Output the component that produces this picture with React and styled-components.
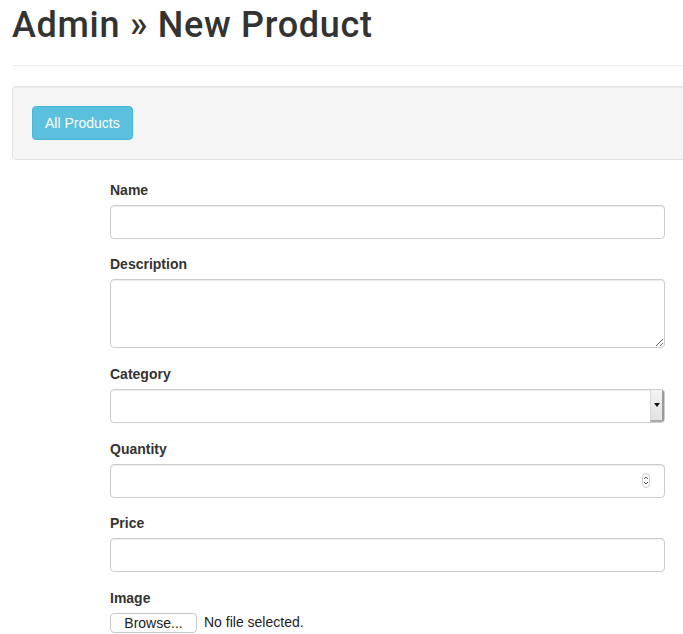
import React from 'react'
import styled, { createGlobalStyle } from 'styled-components'

const GlobalStyle = createGlobalStyle`
  html, body {
    margin: 0;
    padding: 0;
    background: #fff;
    overflow-x: hidden;
  }
  body {
    font-family: "Liberation Sans", Arial, Helvetica, sans-serif;
    font-size: 14px;
    line-height: 1.428571;
    color: #333;
  }
  * { box-sizing: border-box; }
`

const Page = styled.div`
  width: 683px;
  padding-left: 12px;
  overflow: hidden;
`

const Header = styled.div`
  padding-bottom: 19px;
  border-bottom: 1px solid #eee;
  margin-bottom: 20px;
  margin-right: -40px;
`

const Title = styled.h1`
  margin: 6px 0 0;
  font-family: Roboto, "Liberation Sans", Arial, sans-serif;
  font-size: 36px;
  font-weight: 500;
  letter-spacing: 0.7px;
  line-height: 1.1;
  color: #333;
`

const Well = styled.div`
  background: #f5f5f5;
  border: 1px solid #e3e3e3;
  border-radius: 4px 0 0 4px;
  box-shadow: inset 0 1px 1px rgba(0, 0, 0, 0.05);
  padding: 19px;
  margin-bottom: 20px;
  margin-right: -40px;
`

const InfoButton = styled.button`
  display: inline-block;
  font-family: inherit;
  font-size: 14px;
  line-height: 20px;
  padding: 6px 12px;
  color: #fff;
  background: #5bc0de;
  border: 1px solid #46b8da;
  border-radius: 4px;
  cursor: pointer;
`

const Form = styled.form`
  width: 555px;
  margin-left: 98px;
`

const Group = styled.div`
  margin-bottom: 15.7px;
  position: relative;
`

const Label = styled.label`
  display: block;
  font-weight: 700;
  margin-bottom: 5px;
  line-height: 20px;
`

const Field = styled.div`
  position: relative;
  height: ${p => p.$h || 34}px;
  border: 1px solid #ccc;
  border-radius: 4px;
  background: #fff;
  box-shadow: inset 0 1px 1px rgba(0, 0, 0, 0.075);
  overflow: hidden;
`

const Input = styled.input`
  width: 100%;
  height: 100%;
  border: 0;
  outline: 0;
  background: transparent;
  padding: 6px 12px;
  font: inherit;
`

const Textarea = styled.textarea`
  width: 100%;
  height: 100%;
  border: 0;
  outline: 0;
  background: transparent;
  padding: 6px 12px;
  font: inherit;
  resize: vertical;
  display: block;
`

const SelectArrow = styled.div`
  position: absolute;
  top: 0;
  right: 0;
  bottom: 0;
  width: 14px;
  background: linear-gradient(#f4f4f4, #e2e2e2);
  border-left: 1px solid #d8d8d8;
  border-right: 2px solid #999;
  border-bottom: 2px solid #aaa;
  display: flex;
  align-items: center;
  justify-content: center;
  &::after {
    content: '';
    border-left: 3px solid transparent;
    border-right: 3px solid transparent;
    border-top: 4px solid #111;
  }
`

const Spinner = styled.div`
  position: absolute;
  right: 14px;
  top: 8px;
  width: 8px;
  height: 15px;
  border: 1px solid #ccc;
  border-radius: 4px;
  background: #fff;
  svg { display: block; }
`

const FileRow = styled.div`
  display: flex;
  align-items: center;
  gap: 7px;
`

const BrowseButton = styled.button`
  font-family: "Liberation Sans", Arial, sans-serif;
  font-size: 14px;
  height: 20px;
  width: 87px;
  padding: 0;
  border: 1px solid #c8c8c8;
  border-radius: 4px;
  background: #fff;
  color: #222;
  line-height: 18px;
`

const FileText = styled.span`
  font-size: 14px;
  color: #222;
`

export default function App() {
  return (
    <>
      <GlobalStyle />
      <Page>
        <Header>
          <Title>Admin » New Product</Title>
        </Header>
        <Well>
          <InfoButton>All Products</InfoButton>
        </Well>
        <Form>
          <Group>
            <Label>Name</Label>
            <Field><Input type="text" /></Field>
          </Group>
          <Group>
            <Label>Description</Label>
            <Field $h={69}><Textarea /></Field>
          </Group>
          <Group>
            <Label>Category</Label>
            <Field><SelectArrow /></Field>
          </Group>
          <Group>
            <Label>Quantity</Label>
            <Field>
              <Input type="text" />
              <Spinner>
                <svg width="6" height="13" viewBox="0 0 6 13">
                  <path d="M1 5 L3 3 L5 5" fill="none" stroke="#555" strokeWidth="1" />
                  <path d="M1 8 L3 10 L5 8" fill="none" stroke="#555" strokeWidth="1" />
                </svg>
              </Spinner>
            </Field>
          </Group>
          <Group>
            <Label>Price</Label>
            <Field><Input type="text" /></Field>
          </Group>
          <Group>
            <Label>Image</Label>
            <FileRow>
              <BrowseButton type="button">Browse...</BrowseButton>
              <FileText>No file selected.</FileText>
            </FileRow>
          </Group>
        </Form>
      </Page>
    </>
  )
}
